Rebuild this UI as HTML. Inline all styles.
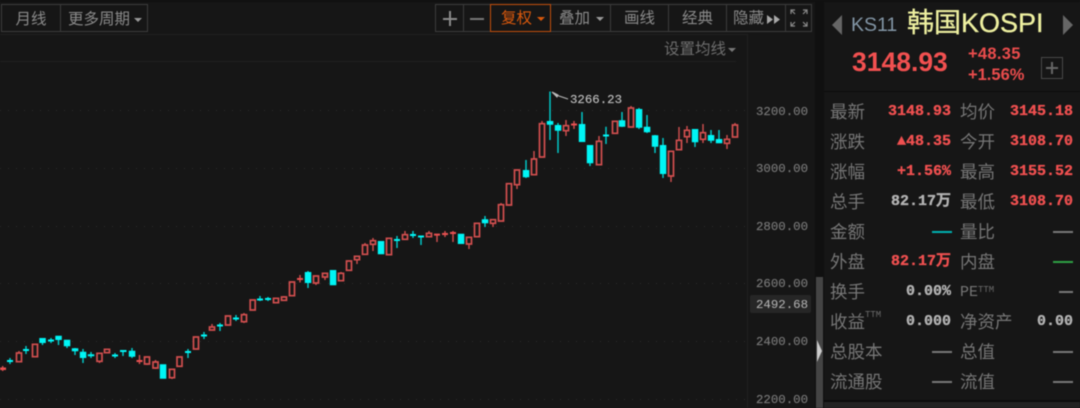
<!DOCTYPE html>
<html lang="zh"><head><meta charset="utf-8">
<style>
html,body{margin:0;padding:0;width:1080px;height:408px;overflow:hidden;background:#161616}
#p{position:relative;width:1080px;height:408px;overflow:hidden;background:#161616;filter:blur(.45px);font-family:"Liberation Sans","Noto Sans CJK SC",sans-serif}
#p span,#p div{position:absolute;white-space:nowrap}
.b{top:4px;height:26px;border:1px solid #3c3c3c;color:#8a8a8a;font-size:15.5px;line-height:29px;text-align:center;box-sizing:content-box}
.a{left:756px;font:12.4px/14px "Liberation Mono",monospace;color:#787878;-webkit-text-stroke:.15px #787878}
.l{left:830px;font-size:17.5px;line-height:22px;color:#767676}
.m{left:960px;font-size:17.5px;line-height:22px;color:#767676}
.v,.w{font:bold 15px/18px "Liberation Mono","Noto Sans CJK SC",monospace;text-align:right;color:#f05050;-webkit-text-stroke:.3px}
.v{right:129px}.w{right:7px}
.g{color:#b4b4b4}
.d{height:2px;width:20px;background:#777;margin-top:-.5px}
.t{font:9px/10px "Liberation Mono",monospace;color:#6b6b6b}
.x{font-size:15.5px;line-height:29px;color:#8a8a8a;top:4px}
</style></head><body><div id="p">
<div style="left:0;top:0;width:1080px;height:2px;background:#101010"></div>
<div style="left:0;top:34px;width:748px;height:1px;background:#202020"></div>
<div style="left:0;top:61px;width:736px;height:1px;background:#202020"></div>
<div style="left:747px;top:34px;width:1px;height:374px;background:#202020"></div>
<div style="left:815px;top:0;width:9px;height:408px;background:#101010"></div>
<div style="left:816px;top:277px;width:7px;height:131px;background:#444"></div>
<div style="left:817px;top:340px;width:0;height:0;border-left:5px solid #ccc;border-top:11px solid transparent;border-bottom:11px solid transparent"></div>
<div style="left:824px;top:91px;width:256px;height:1px;background:#0c0c0c"></div>
<div style="left:824px;top:400px;width:256px;height:2px;background:#0c0c0c"></div>
<div style="left:824px;top:402px;width:256px;height:6px;background:#222"></div>

<div class="b" style="left:1px;width:58px">月线</div>
<div class="b" style="left:60px;width:86px;text-align:left;text-indent:7px">更多周期</div>
<div style="left:134px;top:18px;border-top:4px solid #999;border-left:4px solid transparent;border-right:4px solid transparent"></div>

<div style="left:435px;top:4px;width:377px;height:28px;box-sizing:border-box;border:1px solid #3c3c3c"></div>
<div style="left:463px;top:4px;width:1px;height:28px;background:#3c3c3c"></div>
<div style="left:610px;top:4px;width:1px;height:28px;background:#3c3c3c"></div>
<div style="left:668px;top:4px;width:1px;height:28px;background:#3c3c3c"></div>
<div style="left:726px;top:4px;width:1px;height:28px;background:#3c3c3c"></div>
<div style="left:785px;top:4px;width:1px;height:28px;background:#3c3c3c"></div>
<div style="left:443px;top:18px;width:14px;height:1.5px;background:#8a8a8a"></div>
<div style="left:449px;top:11px;width:1.5px;height:15px;background:#8a8a8a"></div>
<div style="left:470px;top:18px;width:14px;height:1.5px;background:#777"></div>
<div style="left:490px;top:4px;width:61px;height:28px;box-sizing:border-box;border:1px solid #c24e0c;color:#d8580c;font-size:15.5px;line-height:28px;text-indent:10px">复权</div>
<div style="left:537px;top:17px;border-top:4px solid #d8580c;border-left:4px solid transparent;border-right:4px solid transparent"></div>
<span class="x" style="left:559px">叠加</span>
<div style="left:596px;top:17px;border-top:4px solid #999;border-left:4px solid transparent;border-right:4px solid transparent"></div>
<span class="x" style="left:624px">画线</span>
<span class="x" style="left:682px">经典</span>
<span class="x" style="left:733px">隐藏</span>
<svg style="position:absolute;left:766px;top:14px" width="16" height="11"><path d="M1 1l6 4.500-6 4.500zM8 1l6 4.500-6 4.500z" fill="#a8a8a8"/></svg>
<svg style="position:absolute;left:789px;top:8px" width="20" height="20" fill="none" stroke="#8a8a8a" stroke-width="1.2"><path d="M2 6V2h4M2 2l4 4M14 2h4v4M18 2l-4 4M2 14v4h4M2 18l4-4M14 18h4v-4M18 18l-4-4"/></svg>

<span style="left:664px;top:39px;font-size:15.5px;line-height:22px;color:#6e6e6e">设置均线</span>
<div style="left:728px;top:48px;border-top:4px solid #777;border-left:4px solid transparent;border-right:4px solid transparent"></div>

<svg style="position:absolute;left:0;top:0" width="748" height="408" fill="none">
<path d="M0 110.500H748M0 168.500H748M0 226.500H748M0 283.500H748M0 341.500H748M0 399.500H748" stroke="#2c2c2c" stroke-dasharray="1 7"/>
<path stroke="#d24f4f" stroke-width="1.400" d="M2.700 366V371M19 351V362M99.500 353V363M147 357V365M155.500 360V369M172 369V379M139.500 355V364M212 324V330M244 313V323M284 296V300M300 275V282.500M316 276V285M325 273V280M341 272V280M357 256V264M365 243V254M373 238V251M405 231V239M429 231V236M437 234V242M445 231V237M453 231V242M469 237V249M493 220V227M501 203V221M517 170V189M534 151V175M542 121V157M566 120V136M574 121V129M599 136V165M631 106V127M671 151V182M679 127V150M687 126V143M703 124V143M727 135V149M735 123V137"/>
<path stroke="#d24f4f" stroke-width="1.700" fill="#161616" d="M16.500 353h5V361.700h-5zM32.500 344.300h5V356.700h-5zM97 353.300h5V361.300h-5zM104.500 349.300h5V352.700h-5zM144.500 357h5V364h-5zM153 362h5V368h-5zM169.500 369.300h5V377.700h-5zM177 357h5V366.300h-5zM193.500 337h5V349h-5zM209.500 327h5V330h-5zM225.500 316h5V325h-5zM241.500 314.700h5V321.700h-5zM250.200 300h5V310h-5zM273.500 298.300h5V302.700h-5zM281.500 297h5V300.300h-5zM289.500 282h5V295.700h-5zM313.500 276h5V283h-5zM322.500 273.300h5V277h-5zM338.500 273.300h5V280.700h-5zM346.500 261h5V270.300h-5zM354.500 256.300h5V259.700h-5zM362.500 245h5V254.300h-5zM370.500 240.700h5V244.300h-5zM386.500 238.300h5V254.700h-5zM402.500 234.700h5V239.300h-5zM426.500 233.300h5V236.700h-5zM466.500 237.300h5V244h-5zM474.500 223.300h5V236.700h-5zM490.500 219.700h5V223.300h-5zM498.500 204.700h5V221h-5zM506.500 183.700h5V205h-5zM514.500 170h5V184.700h-5zM531.500 159h5V174.700h-5zM539.500 123.700h5V157h-5zM563.500 125.700h5V130.700h-5zM596.500 141.300h5V164.700h-5zM612.500 121.300h5V133.300h-5zM628.500 108h5V127h-5zM668.500 151.300h5V176h-5zM676.500 140.300h5V149.700h-5zM684.500 130.300h5V136.700h-5zM700.500 132.700h5V139.300h-5zM724.500 139.300h5V143.300h-5zM732.500 125h5V137h-5z"/>
<path fill="#e85050" d="M0 367.500h6v2.500h-6zM136.500 360h6v2h-6zM297 278h6v2h-6zM434 233.600h6v2h-6zM442 233h6v2h-6zM450 232h6v2h-6zM571 123.500h6v2h-6z"/>
<path stroke="#00d0d0" stroke-width="1.400" d="M10 358V364M26 346V354M42.500 338V345M51 338V343M58.500 336V345M67 340V348M75 348V355M83 349V363M91 352V358M115 353V358M123 350V356M132 348V358M188 349V358M204 332V339M220 323V331M236 315V321M260 296V301M268 297V301M308 271V288M397 236V248M413 231V238M421 236V245M485 216V227M526 160V178M550 91.500V140M558 123V153M582 112V142M590 145V166M606 126.700V144M622 112V127M639 108V129M647 115V133M655 135V153M663 138V178M695 129V147M711 130V143M719 130V143"/>
<path fill="#00f5f5" d="M7 360h6v2h-6zM23 349h6v2h-6zM39.300 338h6.500V343h-6.500zM48 339.500h6v2h-6zM55.300 335.700h6.500V340h-6.500zM63.800 339.700h6.500V346.300h-6.500zM71.800 348.300h6.500V351.300h-6.500zM79.800 351.700h6.500V358h-6.500zM87.800 354.300h6.500V356.300h-6.500zM112 354.500h6v2h-6zM120 350h6.500V352h-6.500zM128.800 350.700h6.500V356.700h-6.500zM159.800 364.300h6.500V378.700h-6.500zM185 351h6v2h-6zM201 334.500h6v2h-6zM217 324.500h6v2h-6zM233 317.500h6v2h-6zM257 298.500h6v2h-6zM265 298h6v2h-6zM304.800 272h6.500V283h-6.500zM329.800 270h6.500V285.300h-6.500zM377.800 241h6.500V254.300h-6.500zM394 239h6v2h-6zM410 234h6v2h-6zM418 235.500h6v2h-6zM457.800 233.700h6.500V244h-6.500zM481.800 219.300h6.500V223.300h-6.500zM522.800 170h6.500V177.300h-6.500zM546.800 121h6.500V124.700h-6.500zM554.800 125h6.500V130.700h-6.500zM578.800 124h6.500V142h-6.500zM586.800 145h6.500V163.300h-6.500zM603 134.500h6v2h-6zM618.800 120.300h6.500V126.700h-6.500zM635.800 109h6.500V127.700h-6.500zM643.800 126.700h6.500V132.300h-6.500zM651.800 135.300h6.500V146.700h-6.500zM659.800 145h6.500V174h-6.500zM691.800 129h6.500V142.300h-6.500zM707.800 135h6.500V140.700h-6.500zM715.800 139h6.500V143.300h-6.500z"/>
<path d="M552 92l6 3-1 2zM556 95l12 4" fill="#bbb" stroke="#bbb"/>
</svg>
<span style="left:570px;top:93px;font:12.4px/14px 'Liberation Mono',monospace;color:#bdbdbd;-webkit-text-stroke:.15px #bdbdbd">3266.23</span>

<span class="a" style="top:105px">3200.00</span>
<span class="a" style="top:162px">3000.00</span>
<span class="a" style="top:220px">2800.00</span>
<span class="a" style="top:277px">2600.00</span>
<div style="left:750px;top:295px;width:61px;height:18px;background:#262626;border-radius:2px"></div>
<span class="a" style="top:298px;color:#b8b8b8">2492.68</span>
<span class="a" style="top:335px">2400.00</span>
<span class="a" style="top:393px">2200.00</span>

<div style="left:832px;top:15px;border-right:10px solid #666;border-top:10px solid transparent;border-bottom:10px solid transparent"></div>
<span style="left:851px;top:14px;font-size:19.500px;line-height:22px;color:#8295a5">KS11</span>
<span style="left:907px;top:8px;font-size:27px;line-height:30px;color:#eef0a0;-webkit-text-stroke:.3px #eef0a0">韩国KOSPI</span>
<div style="left:1063px;top:15px;border-left:10px solid #666;border-top:10px solid transparent;border-bottom:10px solid transparent"></div>
<span style="left:852px;top:47px;font-size:26.500px;line-height:30px;font-weight:bold;color:#f25050">3148.93</span>
<span style="left:968px;top:45px;font-size:16.500px;line-height:18px;font-weight:bold;letter-spacing:.3px;color:#ea4c4c">+48.35</span>
<span style="left:968px;top:66px;font-size:16.500px;line-height:18px;font-weight:bold;color:#ea4c4c">+1.56%</span>
<div style="left:1041px;top:57px;width:22px;height:22px;box-sizing:border-box;border:1px solid #4a4a4a"></div>
<div style="left:1046px;top:67px;width:12px;height:2px;background:#666"></div>
<div style="left:1051px;top:62px;width:2px;height:12px;background:#666"></div>

<span class="l" style="top:101px">最新</span><span class="v" style="top:103px">3148.93</span><span class="m" style="top:101px">均价</span><span class="w" style="top:103px">3145.18</span>
<span class="l" style="top:131px">涨跌</span><span class="v" style="top:133px">▲48.35</span><span class="m" style="top:131px">今开</span><span class="w" style="top:133px">3108.70</span>
<span class="l" style="top:161px">涨幅</span><span class="v" style="top:163px">+1.56%</span><span class="m" style="top:161px">最高</span><span class="w" style="top:163px">3155.52</span>
<span class="l" style="top:191px">总手</span><span class="v g" style="top:193px">82.17万</span><span class="m" style="top:191px">最低</span><span class="w" style="top:193px">3108.70</span>
<span class="l" style="top:221px">金额</span><div class="d" style="left:932px;top:231px;background:#00b0b0"></div><span class="m" style="top:221px">量比</span><div class="d" style="left:1053px;top:231px"></div>
<span class="l" style="top:251px">外盘</span><span class="v" style="top:253px">82.17万</span><span class="m" style="top:251px">内盘</span><div class="d" style="left:1053px;top:261px;background:#2ea043"></div>
<span class="l" style="top:281px">换手</span><span class="v g" style="top:283px">0.00%</span><span class="m" style="top:284px;font:15px/18px 'Liberation Mono',monospace">PE</span><span class="t" style="left:978px;top:285px">TTM</span><div class="d" style="left:1059px;top:291px;width:14px"></div>
<span class="l" style="top:311px">收益</span><span class="t" style="left:865px;top:310px">TTM</span><span class="v g" style="top:313px">0.000</span><span class="m" style="top:311px">净资产</span><span class="w g" style="top:313px">0.00</span>
<span class="l" style="top:341px">总股本</span><div class="d" style="left:932px;top:351px"></div><span class="m" style="top:341px">总值</span><div class="d" style="left:1053px;top:351px"></div>
<span class="l" style="top:371px">流通股</span><div class="d" style="left:932px;top:381px"></div><span class="m" style="top:371px">流值</span><div class="d" style="left:1053px;top:381px"></div>
</div></body></html>
